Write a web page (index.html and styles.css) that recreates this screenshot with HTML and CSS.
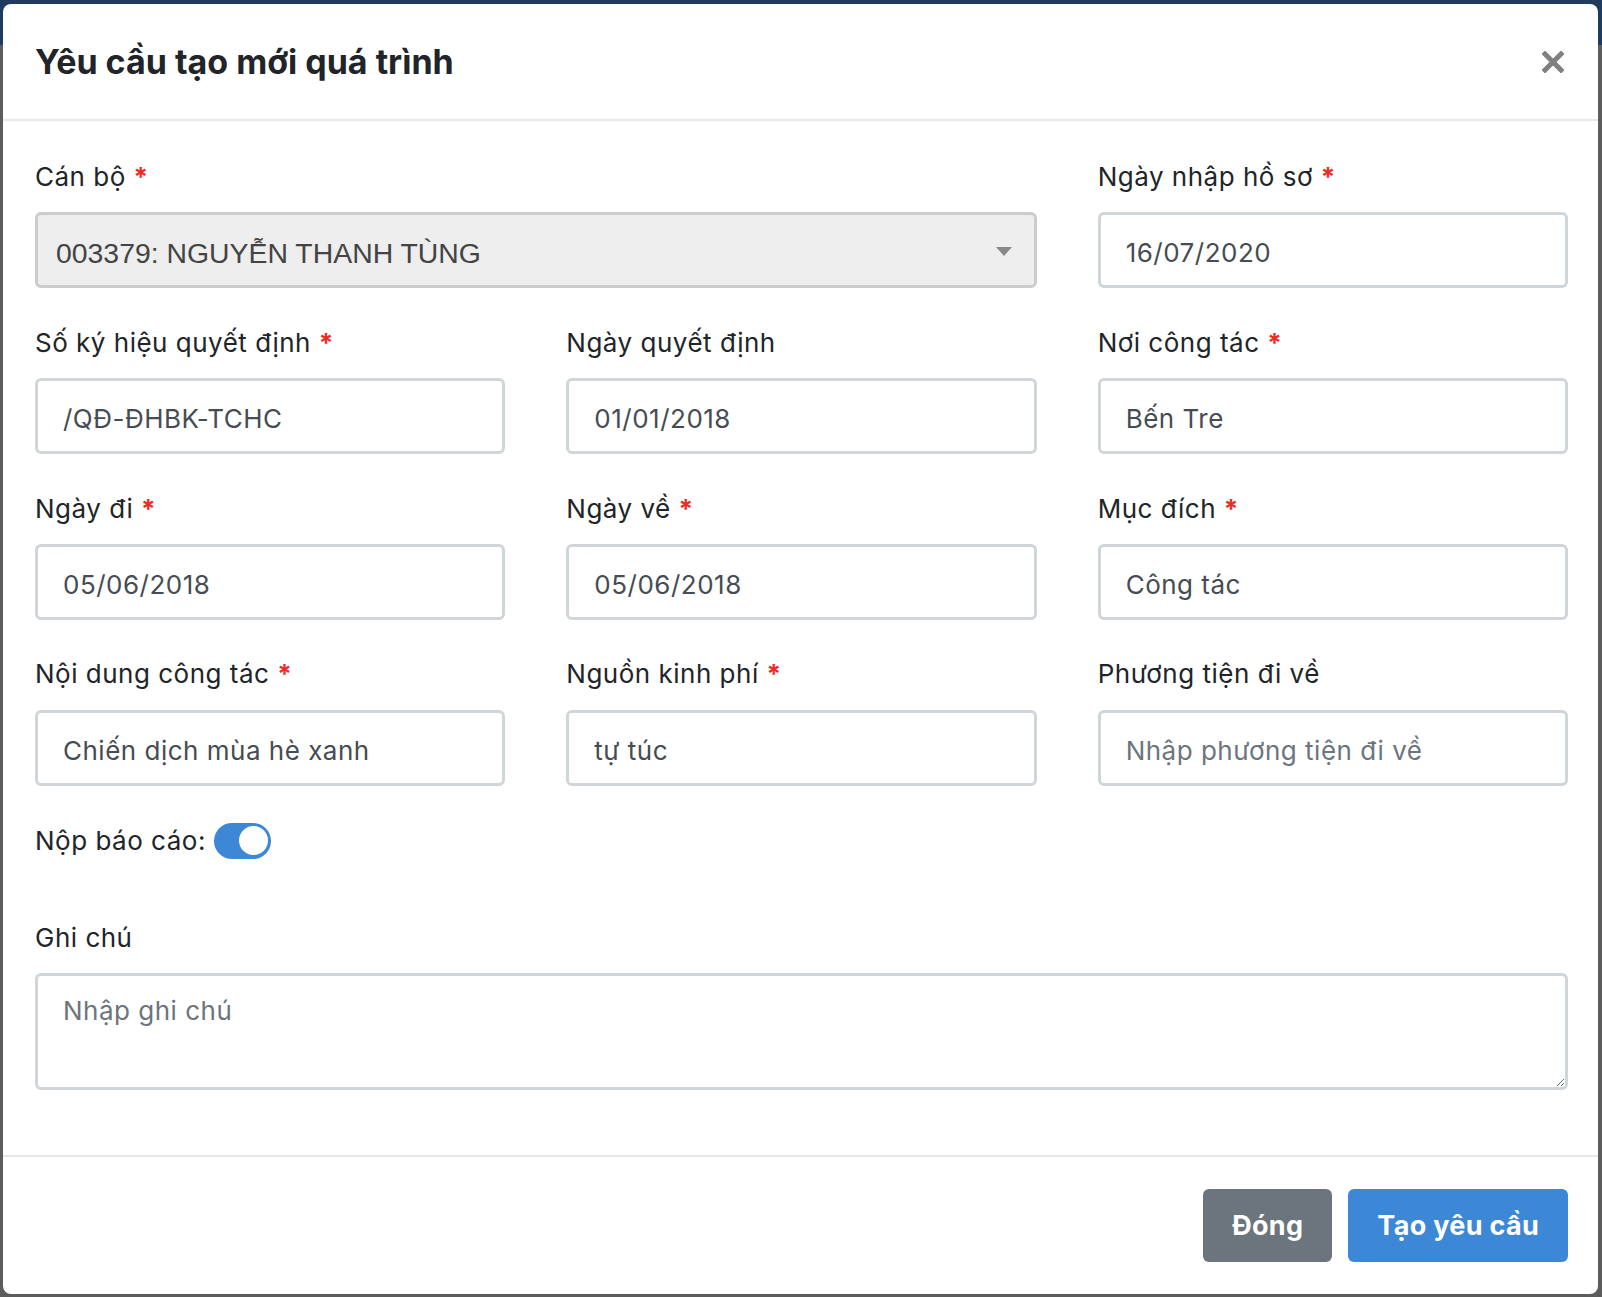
FILE: index.html
```html
<!DOCTYPE html>
<html lang="vi">
<head>
<meta charset="utf-8">
<title>Yêu cầu tạo mới quá trình</title>
<link rel="stylesheet" href="styles.css">
</head>
<body>
<div class="backdrop">
  <div class="modal">
    <header class="modal-header">
      <h5 class="modal-title">Yêu cầu tạo mới quá trình</h5>
      <button class="close" type="button" aria-label="Close">
        <svg viewBox="0 0 22 22" width="22" height="22"><path d="M3 3 L19 19 M19 3 L3 19" stroke="#808080" stroke-width="5" stroke-linecap="square"/></svg>
      </button>
    </header>
    <div class="modal-body">
      <div class="form-grid">
        <div class="field span2">
          <label class="lbl">Cán bộ <span class="req">*</span></label>
          <div class="select">
            <span class="select-text">003379: NGUYỄN THANH TÙNG</span>
            <span class="select-arrow"></span>
          </div>
        </div>
        <div class="field">
          <label class="lbl">Ngày nhập hồ sơ <span class="req">*</span></label>
          <input class="input" type="text" value="16/07/2020">
        </div>

        <div class="field">
          <label class="lbl">Số ký hiệu quyết định <span class="req">*</span></label>
          <input class="input" type="text" value="/QĐ-ĐHBK-TCHC">
        </div>
        <div class="field">
          <label class="lbl">Ngày quyết định</label>
          <input class="input" type="text" value="01/01/2018">
        </div>
        <div class="field">
          <label class="lbl">Nơi công tác <span class="req">*</span></label>
          <input class="input" type="text" value="Bến Tre">
        </div>

        <div class="field">
          <label class="lbl">Ngày đi <span class="req">*</span></label>
          <input class="input" type="text" value="05/06/2018">
        </div>
        <div class="field">
          <label class="lbl">Ngày về <span class="req">*</span></label>
          <input class="input" type="text" value="05/06/2018">
        </div>
        <div class="field">
          <label class="lbl">Mục đích <span class="req">*</span></label>
          <input class="input" type="text" value="Công tác">
        </div>

        <div class="field">
          <label class="lbl">Nội dung công tác <span class="req">*</span></label>
          <input class="input" type="text" value="Chiến dịch mùa hè xanh">
        </div>
        <div class="field">
          <label class="lbl">Nguồn kinh phí <span class="req">*</span></label>
          <input class="input" type="text" value="tự túc">
        </div>
        <div class="field">
          <label class="lbl">Phương tiện đi về</label>
          <input class="input" type="text" placeholder="Nhập phương tiện đi về">
        </div>
      </div>

      <div class="switch-row">
        <span class="switch-label">Nộp báo cáo:</span>
        <span class="switch"><span class="knob"></span></span>
      </div>

      <div class="field">
        <label class="lbl">Ghi chú</label>
        <textarea class="input textarea" placeholder="Nhập ghi chú"></textarea>
      </div>
    </div>
    <footer class="modal-footer">
      <button class="btn btn-secondary" type="button">Đóng</button>
      <button class="btn btn-primary" type="button">Tạo yêu cầu</button>
    </footer>
  </div>
</div>
</body>
</html>
```

FILE: styles.css
```css
* { box-sizing: border-box; }

html, body {
  margin: 0;
  padding: 0;
}

body {
  width: 1602px;
  height: 1297px;
  overflow: hidden;
  background: linear-gradient(to bottom, #1f3c60 0, #1f3c60 45px, #5c5c5c 45px, #5c5c5c 100%);
  font-family: "Inter", "Noto Sans", sans-serif;
  color: #212529;
}

.backdrop {
  padding: 4px 4px 3px 3px;
}

.modal {
  background: #fff;
  border-radius: 8px;
  height: 1290px;
  display: flex;
  flex-direction: column;
}

.modal-header {
  display: flex;
  align-items: center;
  justify-content: space-between;
  padding: 32px 34px 32px 32px;
  border-bottom: 2px solid #e8e8ec;
}

.modal-title {
  margin: 0;
  font-size: 34px;
  line-height: 51px;
  font-weight: 700;
  color: #212529;
  letter-spacing: 0;
}

.close {
  border: 0;
  background: none;
  padding: 0;
  width: 22px;
  height: 22px;
  display: flex;
  cursor: pointer;
}

.modal-body {
  flex: 1;
  padding: 37px 30px 0 32px;
}

.form-grid {
  display: grid;
  grid-template-columns: repeat(3, 1fr);
  column-gap: 61px;
  row-gap: 35.4px;
}

.field {
  display: flex;
  flex-direction: column;
}

.span2 {
  grid-column: span 2;
}

.lbl {
  font-size: 26px;
  line-height: 38.4px;
  letter-spacing: 0.5px;
  margin-bottom: 16px;
  color: #212529;
}

.req {
  color: #ee2a24;
  font-weight: 700;
}

.input {
  height: 76px;
  width: 100%;
  border: 3px solid #d0d5da;
  border-radius: 6px;
  padding: 5px 25px 0 25px;
  font-family: "Inter", "Noto Sans", sans-serif;
  font-size: 26px;
  letter-spacing: 0.5px;
  color: #464c53;
  background: #fff;
  outline: none;
}

.input::placeholder {
  color: #6c757d;
  opacity: 1;
}

.select {
  height: 76px;
  border: 3px solid #cccccc;
  border-radius: 6px;
  background: #eeeeee;
  display: flex;
  align-items: center;
  justify-content: space-between;
  padding: 6px 22px 0 18px;
}

.select-text {
  font-family: "Liberation Sans", Arial, sans-serif;
  font-size: 28.4px;
  color: #444;
}

.select-arrow {
  width: 0;
  height: 0;
  margin-top: -4px;
  border-left: 8px solid transparent;
  border-right: 8px solid transparent;
  border-top: 9px solid #888;
}

.switch-row {
  display: flex;
  align-items: center;
  gap: 8px;
  margin-top: 37px;
  height: 36px;
  margin-bottom: 60px;
}

.switch-label {
  font-size: 26px;
  letter-spacing: 0.5px;
  line-height: 36px;
}

.switch {
  width: 57px;
  height: 36px;
  border-radius: 18px;
  background: #3d88d6;
  display: flex;
  align-items: center;
  justify-content: flex-end;
  padding: 0 3px;
}

.knob {
  width: 29px;
  height: 29px;
  border-radius: 50%;
  background: #fff;
}

.textarea {
  height: 117px;
  padding: 16px 25px;
  resize: vertical;
  line-height: 38px;
  display: block;
}

.modal-footer {
  display: flex;
  justify-content: flex-end;
  gap: 16px;
  padding: 32px 30px 32px 32px;
  border-top: 2px solid #e8e8ec;
}

.btn {
  height: 73px;
  border: 0;
  border-radius: 6px;
  padding: 0 29px;
  font-family: "Inter", "Noto Sans", sans-serif;
  font-size: 27px;
  letter-spacing: 0.3px;
  font-weight: 700;
  color: #fff;
  cursor: pointer;
}

.btn-secondary {
  background: #6c757d;
}

.btn-primary {
  background: #3d88d6;
}
```
